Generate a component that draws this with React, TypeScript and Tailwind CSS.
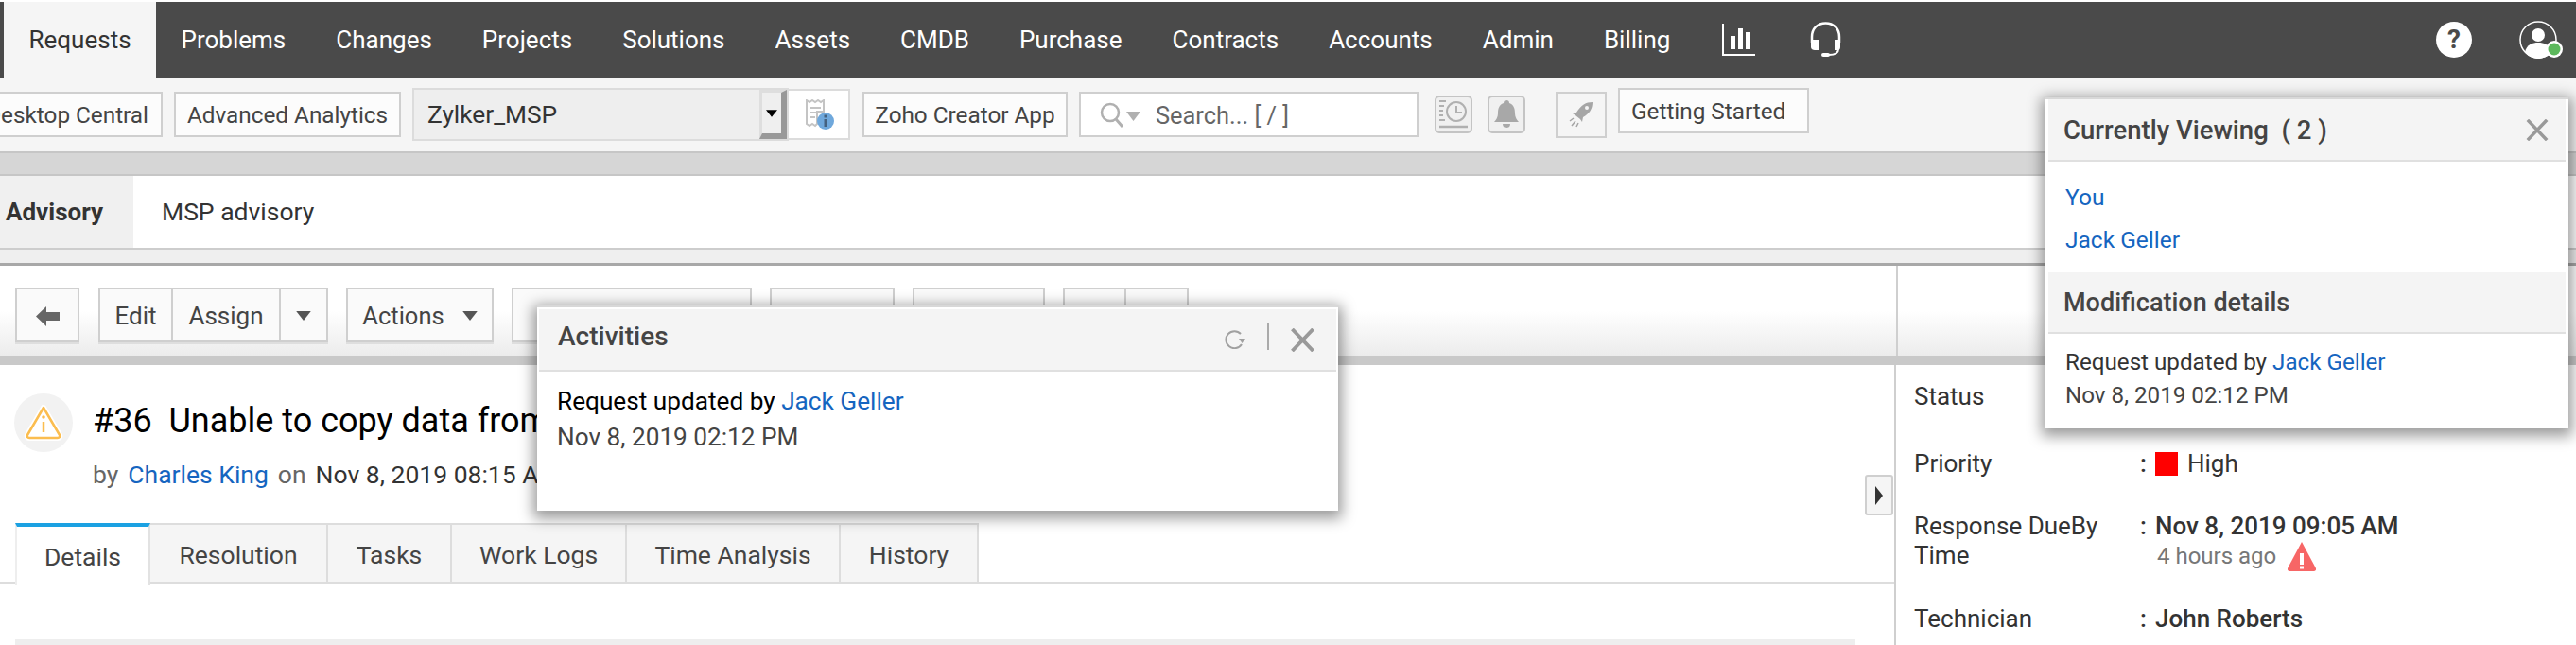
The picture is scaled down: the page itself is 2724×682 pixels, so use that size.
import React from 'react';

const navItems = ['Problems', 'Changes', 'Projects', 'Solutions', 'Assets', 'CMDB', 'Purchase', 'Contracts', 'Accounts', 'Admin', 'Billing'];
const detailTabs = [
  { label: 'Resolution', width: 'w-[188px]' },
  { label: 'Tasks', width: 'w-[131px]' },
  { label: 'Work Logs', width: 'w-[185px]' },
  { label: 'Time Analysis', width: 'w-[226px]' },
  { label: 'History', width: 'w-[146px]' },
];

const Caret: React.FC<{ className?: string }> = ({ className }) => (
  <svg viewBox="0 0 14 9" className={className}>
    <path d="M0 0h14L7 9z" fill="currentColor" />
  </svg>
);

const ChartIcon = () => (
  <svg viewBox="0 0 35 34" className="h-[34px] w-[35px] text-white">
    <path d="M0 0h2v32h33v2H0z" fill="currentColor" />
    <path d="M9 13h5v14H9zM17 5h5v22h-5zM25 9h5v18h-5z" fill="currentColor" />
  </svg>
);

const HeadsetIcon = () => (
  <svg viewBox="0 0 33 38" className="h-[38px] w-[33px] text-white" fill="none" stroke="currentColor">
    <path d="M2 22V16C2 7 8 1.500 16.500 1.500S31 7 31 16v6" strokeWidth="2.500" />
    <path d="M1 19h8v11H5c-2 0-4-1-4-3zM32 19h-6v11h3c2 0 3-1 3-3z" fill="currentColor" stroke="none" />
    <path d="M30 29c0 4-4 6-10 6" strokeWidth="2" />
    <rect x="12" y="33" width="9" height="4" rx="2" fill="currentColor" stroke="none" />
  </svg>
);

const HelpIcon = () => (
  <div className="flex h-[38px] w-[38px] items-center justify-center rounded-full bg-white text-[28px] font-bold text-[#4a4a4a]">?</div>
);

const UserIcon = () => (
  <svg viewBox="0 0 46 42" className="h-[42px] w-[46px]">
    <circle cx="20" cy="20" r="19" fill="none" stroke="#fff" strokeWidth="1.500" />
    <circle cx="20" cy="15" r="7" fill="#fff" />
    <path d="M6 33c2-8 8-10 14-10s12 2 14 10c-4 5-9 7-14 7s-10-2-14-7z" fill="#fff" />
    <circle cx="37" cy="30" r="9" fill="#fff" />
    <circle cx="37" cy="30" r="6.500" fill="#5cb85c" />
  </svg>
);

const ReceiptIcon = () => (
  <svg viewBox="0 0 32 32" className="h-[32px] w-[32px]">
    <path d="M3 1l3 2 3-2 3 2 3-2 3 2 3-2v12H14v13l-2 2-3-2-3 2-3-2z" fill="none" stroke="#c4c4c4" strokeWidth="2" />
    <path d="M7 9h11M7 14h6M7 19h5" stroke="#c4c4c4" strokeWidth="2" />
    <circle cx="23" cy="23" r="9" fill="#6fa8dc" />
    <path d="M21.500 21h3v8h-3zM21.500 16.500h3v3h-3z" fill="#44617f" />
  </svg>
);

const SearchIcon = () => (
  <svg viewBox="0 0 44 28" className="h-[28px] w-[44px]">
    <circle cx="11" cy="11" r="9" fill="none" stroke="#b0b0b0" strokeWidth="2.500" />
    <path d="M17 18l7 8" stroke="#b0b0b0" strokeWidth="3" />
    <path d="M28 10h15l-7.500 10z" fill="#b0b0b0" />
  </svg>
);

const HistoryIcon = () => (
  <div className="h-[40px] w-[40px] rounded-[5px] border-2 border-[#c4c4c4] bg-[#f0f0f0]">
    <svg viewBox="0 0 36 36" className="h-[36px] w-[36px]" fill="none" stroke="#b0b0b0">
      <circle cx="21" cy="15" r="10" strokeWidth="2" />
      <path d="M21 9v7h6" strokeWidth="2" />
      <path d="M3 4h7M3 9h5M3 14h4M3 19h4M3 24h6" strokeWidth="2" />
      <path d="M3 31h30" strokeWidth="2.500" />
    </svg>
  </div>
);

const BellIcon = () => (
  <div className="h-[40px] w-[40px] rounded-[5px] border-2 border-[#c4c4c4] bg-[#f0f0f0]">
    <svg viewBox="0 0 36 36" className="h-[36px] w-[36px]">
      <path d="M18 3c2 0 3 1 3 3 5 2 6 6 6 11 0 4 2 7 4 9H5c2-2 4-5 4-9 0-5 1-9 6-11 0-2 1-3 3-3z" fill="#a8a8a8" />
      <path d="M14 28h8c0 3-2 4-4 4s-4-1-4-4z" fill="#a8a8a8" />
    </svg>
  </div>
);

const RocketIcon = () => (
  <svg viewBox="0 0 28 28" className="h-[28px] w-[28px]">
    <path d="M26 1c-7 0-12 3-17 11l-4 1 3 2 5 4 2 3 1-5c7-4 10-9 10-16z" fill="#a6a6a6" />
    <circle cx="20" cy="7" r="2" fill="#f5f5f5" />
    <path d="M6 18l-4 3M8 21l-4 5M11 23l-2 4" stroke="#a6a6a6" strokeWidth="1.500" />
  </svg>
);

const BackIcon = () => (
  <svg viewBox="0 0 25 21" className="h-[21px] w-[25px]">
    <path d="M0 10.500L11 0v6h14v9H11v6z" fill="#666" />
  </svg>
);

const WarningIcon = () => (
  <svg viewBox="0 0 42 38" className="h-[38px] w-[42px]">
    <path d="M21 3L38 32c.8 1.500-.2 3-2 3H6c-1.800 0-2.800-1.500-2-3z" fill="#fff" stroke="#fff" strokeWidth="6" strokeLinejoin="round" />
    <path d="M21 3L38 32c.8 1.500-.2 3-2 3H6c-1.800 0-2.800-1.500-2-3z" fill="#fff" stroke="#fbbd4f" strokeWidth="2.500" strokeLinejoin="round" />
    <path d="M21 18v11" stroke="#fbbd4f" strokeWidth="2.500" />
    <circle cx="21" cy="13" r="1.800" fill="#fbbd4f" />
  </svg>
);

const AlertIcon = () => (
  <svg viewBox="0 0 30 31" className="h-[31px] w-[30px]">
    <path d="M15 0l15 28c.5 1.500-.5 3-2 3H2c-1.500 0-2.500-1.500-2-3z" fill="#f76666" />
    <path d="M13 12h4v12h-4zM13 25.500h4v3h-4z" fill="#fff" />
  </svg>
);

const RefreshIcon = () => (
  <svg viewBox="0 0 24 20" className="h-[20px] w-[24px]" fill="none">
    <path d="M19 15a9 9 0 1 1 -1 -11" stroke="#a0a0a0" strokeWidth="2" />
    <path d="M16 9h7l-3.500 5z" fill="#a0a0a0" />
  </svg>
);

const CloseIcon: React.FC<{ className?: string }> = ({ className }) => (
  <svg viewBox="0 0 27 26" className={className}>
    <path d="M2 1l23 24M25 1L2 25" stroke="#999" strokeWidth="4" />
  </svg>
);

const ToolButton: React.FC<{ className?: string; children?: React.ReactNode }> = ({ className, children }) => (
  <div className={`flex h-[48px] items-center border-2 border-[#cfcfcf] bg-[#fcfcfc] pt-[2px] ${className ?? ''}`}>{children}</div>
);

const ActionButton: React.FC<{ className?: string; children?: React.ReactNode }> = ({ className, children }) => (
  <div className={`flex h-[58px] items-center justify-center gap-[19px] border-2 border-[#cfcfcf] bg-[#fafafa] pt-[2px] shadow-[0_2px_0_#dedede] ${className ?? ''}`}>
    {children}
  </div>
);

const DetailRow: React.FC<{ label: React.ReactNode; className?: string; children?: React.ReactNode }> = ({ label, className, children }) => (
  <div className={`flex text-[26px] leading-[31px] ${className ?? ''}`}>
    <div className="w-[239px] shrink-0 text-[#333]">{label}</div>
    <div className="w-[16px] shrink-0 font-medium text-[#333]">:</div>
    <div className="text-[#333]">{children}</div>
  </div>
);

export default function App() {
  return (
    <div className="relative h-[682px] w-[2724px] overflow-hidden bg-white pt-[2px] font-[Roboto,sans-serif] text-[#333]">
      {/* main nav */}
      <nav className="flex h-[80px] items-center bg-[#4a4a4a] pl-[4px] pr-[14px] text-[26px] text-white">
        <div className="flex h-full items-center bg-[#f5f5f5] px-[26.500px] text-[#333]">Requests</div>
        {navItems.map((item) => (
          <div key={item} className="px-[26.500px]">
            {item}
          </div>
        ))}
        <div className="ml-[28px]">
          <ChartIcon />
        </div>
        <div className="ml-[58px]">
          <HeadsetIcon />
        </div>
        <div className="ml-auto">
          <HelpIcon />
        </div>
        <div className="ml-[50px] mt-[2px]">
          <UserIcon />
        </div>
      </nav>

      {/* quick links */}
      <div className="flex h-[78px] items-center bg-[#f5f5f5] text-[24.300px] text-[#444]">
        <ToolButton className="ml-[-30px] w-[202px] shrink-0 justify-end pr-[13px]">Desktop Central</ToolButton>
        <ToolButton className="ml-[12px] w-[240px] justify-center">Advanced Analytics</ToolButton>
        <div className="ml-[12px] flex h-[56px] w-[398px] items-center border-2 border-[#dcdcdc] bg-[#eeeeee]">
          <span className="ml-[14px] flex-1 pt-[2px] text-[26.300px] text-[#333]">Zylker_MSP</span>
          <div className="flex h-[52px] w-[29px] items-center justify-center border-[3px] border-b-[6px] border-r-[6px] border-[#dedede] border-b-[#999] border-r-[#999] bg-[#efefef]">
            <Caret className="h-[8px] w-[12px] text-black" />
          </div>
        </div>
        <div className="flex h-[54px] w-[65px] items-center justify-center border-2 border-l-0 border-[#dcdcdc] bg-white">
          <ReceiptIcon />
        </div>
        <ToolButton className="ml-[13px] w-[217px] justify-center">Zoho Creator App</ToolButton>
        <ToolButton className="ml-[12px] w-[359px] bg-white pl-[20px] text-[#666]">
          <SearchIcon />
          <span className="ml-[15px] text-[25.400px]">Search... [ / ]</span>
        </ToolButton>
        <div className="ml-[17px]">
          <HistoryIcon />
        </div>
        <div className="ml-[16px]">
          <BellIcon />
        </div>
        <div className="ml-[32px] flex h-[49px] w-[54px] items-center justify-center border-2 border-[#cfcfcf]">
          <RocketIcon />
        </div>
        <ToolButton className="mb-[8px] ml-[12px] w-[202px] pl-[12px]">Getting Started</ToolButton>
      </div>

      <div className="h-[26px] border-y-2 border-[#c6c6c6] bg-[#d6d6d6]" />

      {/* sub tabs */}
      <div className="flex h-[76px] items-center bg-white text-[26px]">
        <div className="flex h-full w-[141px] items-center bg-[#f0f0f0] pl-[6px] font-bold text-[#333]">Advisory</div>
        <div className="ml-[30px] text-[26.500px] text-[#333]">MSP advisory</div>
      </div>
      <div className="h-[19px] border-b-[3px] border-t-2 border-b-[#a8a8a8] border-t-[#cdcdcd] bg-[#efefef]" />

      {/* action toolbar */}
      <div className="flex h-[95px] bg-gradient-to-b from-white from-50% to-[#ececec]">
        <div className="flex w-[2005px] shrink-0 items-start pl-[16px] pt-[23px] text-[26px] text-[#444]">
          <ActionButton className="w-[68px]">
            <BackIcon />
          </ActionButton>
          <div className="ml-[20px] flex">
            <ActionButton className="w-[79px]">Edit</ActionButton>
            <ActionButton className="ml-[-2px] w-[116px]">Assign</ActionButton>
            <ActionButton className="ml-[-2px] w-[52px]">
              <Caret className="h-[10px] w-[16px] text-[#555]" />
            </ActionButton>
          </div>
          <ActionButton className="ml-[19px] w-[156px] text-[25.500px]">
            Actions
            <Caret className="h-[10px] w-[16px] text-[#555]" />
          </ActionButton>
          <ActionButton className="ml-[19px] w-[254px]">Conversations</ActionButton>
          <ActionButton className="ml-[19px] w-[132px]">Reply</ActionButton>
          <ActionButton className="ml-[19px] w-[140px]">Forward</ActionButton>
          <div className="ml-[19px] flex">
            <ActionButton className="w-[67px]" />
            <ActionButton className="ml-[-2px] w-[68px]" />
          </div>
        </div>
        <div className="w-[2px] bg-[#cfcfcf]" />
      </div>
      <div className="h-[10px] bg-[#c9c9c9]" />

      {/* request content */}
      <div className="flex">
        <div className="relative h-[296px] w-[2003px] shrink-0">
          <div className="flex items-center pl-[15px] pt-[30px]">
            <div className="flex h-[62px] w-[62px] items-center justify-center rounded-full bg-[#f2f2f2]">
              <WarningIcon />
            </div>
            <h1 className="ml-[21px] mt-[-4px] whitespace-pre text-[36px] font-normal text-black">#36  Unable to copy data from</h1>
          </div>
          <div className="ml-[98px] mt-[8px] flex gap-[10px] text-[26.500px] leading-[31px]">
            <span className="text-[#666]">by</span>
            <span className="text-[#1565c0]">Charles King</span>
            <span className="text-[#666]">on</span>
            <span className="text-[#333]">Nov 8, 2019 08:15 AM</span>
          </div>
          <div className="mt-[36px] flex h-[64px] border-b-2 border-[#dddddd] pl-[16px] text-[26.500px] text-[#444]">
            <div className="mb-[-4px] flex w-[143px] items-center justify-center border-l-2 border-r-2 border-t-[4px] border-l-[#eeeeee] border-r-[#e2e2e2] border-t-[#1ba1e2] bg-white pt-[2px]">
              Details
            </div>
            {detailTabs.map((tab) => (
              <div key={tab.label} className={`flex items-center justify-center border-r-2 border-t-2 border-[#dddddd] bg-[#f5f5f5] pt-[3px] ${tab.width}`}>
                {tab.label}
              </div>
            ))}
          </div>
          <div className="ml-[16px] mt-[59px] h-[6px] w-[1946px] bg-[#eeeeee]" />

          <div className="absolute right-[1px] top-[116px] flex h-[43px] w-[30px] items-center justify-center rounded-[3px] border-2 border-[#cfcfcf] bg-[#f5f5f5]">
            <svg viewBox="0 0 8 20" className="h-[20px] w-[8px]">
              <path d="M0 0l8 10-8 10z" fill="#333" />
            </svg>
          </div>
        </div>

        <div className="flex-1 border-l-2 border-[#cfcfcf] pl-[19px] pt-[18px]">
          <DetailRow label="Status" className="h-[71px]" />
          <DetailRow label="Priority" className="h-[50px]">
            <span className="flex items-center gap-[10px]">
              <span className="h-[25px] w-[24px] bg-[#ff0000]" />
              High
            </span>
          </DetailRow>
          <DetailRow
            label={
              <>
                Response DueBy
                <br />
                Time
              </>
            }
            className="mt-[16px] h-[84px]"
          >
            <div className="font-medium">Nov 8, 2019 09:05 AM</div>
            <div className="flex items-center gap-[12px] pl-[2px] pt-[1px] text-[24px] text-[#777]">
              4 hours ago
              <AlertIcon />
            </div>
          </DetailRow>
          <DetailRow label="Technician" className="mt-[14px]">
            <span className="font-medium">John Roberts</span>
          </DetailRow>
        </div>
      </div>

      {/* activities popup */}
      <div className="absolute left-[568px] top-[323px] h-[217px] w-[847px] border-t-2 border-[#d8d8d8] bg-white p-[2px] shadow-[0_4px_14px_4px_rgba(0,0,0,0.4)]">
        <div className="flex h-[66px] items-center border-b-2 border-[#e0e0e0] bg-[#f4f4f4] pl-[20px] pr-[22px]">
          <span className="mb-[6px] text-[28px] font-medium text-[#444]">Activities</span>
          <div className="ml-auto flex items-center">
            <RefreshIcon />
            <div className="mx-[22px] mb-[6px] h-[28px] w-[2px] bg-[#aaaaaa]" />
            <CloseIcon className="h-[25px] w-[27px]" />
          </div>
        </div>
        <div className="pl-[19px] pt-[12px] text-[26.200px] leading-[38px]">
          <div className="text-black">
            Request updated by <span className="text-[#1565c0]">Jack Geller</span>
          </div>
          <div className="text-[#444]">Nov 8, 2019 02:12 PM</div>
        </div>
      </div>

      {/* currently viewing popup */}
      <div className="absolute left-[2163px] top-[103px] h-[350px] w-[553px] border-t-2 border-[#d8d8d8] bg-white px-[3px] shadow-[0_4px_14px_4px_rgba(0,0,0,0.4)]">
        <div className="flex h-[66px] items-center border-b-2 border-[#e0e0e0] bg-[#f4f4f4] pl-[16px] pr-[18px] pt-[2px]">
          <span className="whitespace-pre text-[27.500px] font-medium text-[#444]">Currently Viewing  ( 2 )</span>
          <CloseIcon className="mb-[2px] ml-auto h-[23px] w-[24px]" />
        </div>
        <div className="flex flex-col gap-[14px] pb-[19px] pl-[18px] pt-[22px] text-[24.500px] leading-[31px] text-[#1565c0]">
          <span>You</span>
          <span>Jack Geller</span>
        </div>
        <div className="flex h-[65px] items-center border-b-2 border-[#e0e0e0] bg-[#f4f4f4] pl-[16px] pt-[2px] text-[27px] font-medium text-[#444]">
          Modification details
        </div>
        <div className="pl-[18px] pt-[13px] text-[24.200px] leading-[35px]">
          <div className="text-[#333]">
            Request updated by <span className="text-[#1565c0]">Jack Geller</span>
          </div>
          <div className="text-[#444]">Nov 8, 2019 02:12 PM</div>
        </div>
      </div>
    </div>
  );
}
